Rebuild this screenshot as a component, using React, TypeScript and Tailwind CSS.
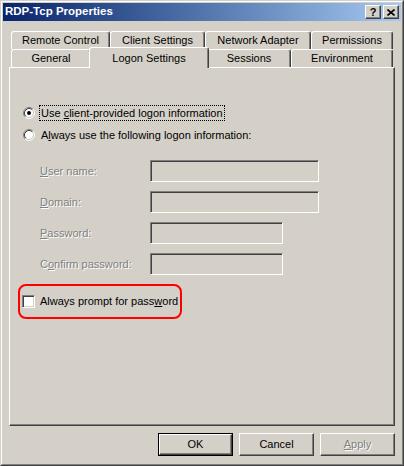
import React from "react";

// Win2000-style 3D edges
const raised =
  "border border-t-white border-l-white border-r-[#404040] border-b-[#404040] shadow-[inset_-1px_-1px_0_#808080]";
const sunken =
  "border border-t-[#808080] border-l-[#808080] border-r-white border-b-white shadow-[inset_1px_1px_0_#404040,inset_-1px_-1px_0_#D4D0C8]";
const disabledText = "text-[#808080] [text-shadow:1px_1px_0_#fff]";

type TabDef = { label: string; w: string; selected?: boolean };

const backTabs: TabDef[] = [
  { label: "Remote Control", w: "w-[99px]" },
  { label: "Client Settings", w: "w-[95px]" },
  { label: "Network Adapter", w: "w-[106px]" },
  { label: "Permissions", w: "w-[82px]" },
];

const frontTabs: TabDef[] = [
  { label: "General", w: "w-[80px]" },
  { label: "Logon Settings", w: "w-[120px]", selected: true },
  { label: "Sessions", w: "w-[84px]" },
  { label: "Environment", w: "w-[102px]" },
];

const Tab: React.FC<TabDef> = ({ label, w, selected }) => (
  <div
    className={`${w} ${
      selected ? "h-[21px] -mx-[2px] -mb-px relative z-10" : "h-[18px]"
    } flex items-center justify-center shrink-0 rounded-t-[3px] border-l border-t border-r border-white border-r-[#404040] shadow-[inset_-1px_0_0_#808080] bg-[#D4D0C8]`}
  >
    {label}
  </div>
);

const Radio: React.FC<{ checked?: boolean }> = ({ checked }) => (
  <svg width="12" height="12" viewBox="0 0 12 12" className="shrink-0">
    <circle cx="6" cy="6" r="4.2" fill="#fff" />
    <path d="M2.11 9.89A5.5 5.5 0 0 1 9.89 2.11" fill="none" stroke="#808080" />
    <path d="M9.89 2.11A5.5 5.5 0 0 1 2.11 9.89" fill="none" stroke="#fff" />
    <path d="M2.82 9.18A4.5 4.5 0 0 1 9.18 2.82" fill="none" stroke="#404040" />
    <path d="M9.18 2.82A4.5 4.5 0 0 1 2.82 9.18" fill="none" stroke="#D4D0C8" />
    {checked && <circle cx="6" cy="6" r="2" fill="#000" />}
  </svg>
);

const fields = [
  { pre: "", key: "U", post: "ser name:", w: "w-[169px]" },
  { pre: "", key: "D", post: "omain:", w: "w-[169px]" },
  { pre: "", key: "P", post: "assword:", w: "w-[133px]" },
  { pre: "C", key: "o", post: "nfirm password:", w: "w-[133px]" },
];

export default function App() {
  return (
    <div className="w-[404px] h-[466px] font-['Liberation_Sans',Arial,sans-serif] text-[11px] text-black leading-none select-none">
      {/* window frame */}
      <div className="w-full h-full border border-t-[#D4D0C8] border-l-[#D4D0C8] border-r-[#404040] border-b-[#404040]">
        <div className="w-full h-full border border-t-white border-l-white border-r-[#808080] border-b-[#808080] bg-[#D4D0C8] p-px flex flex-col">
          {/* title bar */}
          <div className="h-[18px] flex items-center bg-linear-to-r from-[#0A246A] to-[#A6CAF0] pl-[2px] pr-[2px]">
            <span className="text-white font-bold text-[11.5px]">RDP-Tcp Properties</span>
            <div className="ml-auto flex gap-[2px]">
              <div className={`${raised} w-[16px] h-[14px] bg-[#D4D0C8] flex items-center justify-center font-bold text-[11px]`}>
                ?
              </div>
              <div className={`${raised} w-[16px] h-[14px] bg-[#D4D0C8] flex items-center justify-center`}>
                <svg width="8" height="7" viewBox="0 0 8 7">
                  <path d="M0.5 0.5L7.5 6.5M7.5 0.5L0.5 6.5" stroke="#000" strokeWidth="1.6" />
                </svg>
              </div>
            </div>
          </div>

          {/* body */}
          <div className="flex-1 flex flex-col px-[6px] pt-[10px] pb-[7px]">
            {/* tabs */}
            <div className="flex flex-col pl-[2px]">
              <div className="flex h-[18px]">
                {backTabs.map((t) => (
                  <Tab key={t.label} {...t} />
                ))}
              </div>
              <div className="flex h-[18px] items-end">
                {frontTabs.map((t) => (
                  <Tab key={t.label} {...t} />
                ))}
              </div>
            </div>

            {/* tab page */}
            <div className="h-[359px] border border-t-white border-l-white border-r-[#404040] border-b-[#404040] shadow-[inset_-1px_-1px_0_#808080] flex flex-col pt-[37px]">
              <div className="flex items-center h-[16px] ml-[13px]">
                <Radio checked />
                <div className="ml-[4px] px-px h-[16px] leading-[14px] border border-dotted border-black">
                  Use <span className="underline">c</span>lient-provided logon information
                </div>
              </div>
              <div className="flex items-center h-[16px] ml-[13px] mt-[6px]">
                <Radio />
                <div className="ml-[4px] px-px h-[16px] leading-[14px] border border-transparent">
                  A<span className="underline">l</span>ways use the following logon information:
                </div>
              </div>

              <div className="flex flex-col gap-[9px] mt-[17px]">
                {fields.map((f) => (
                  <div key={f.post} className="flex items-center h-[22px] ml-[30px]">
                    <span className={`w-[110px] ${disabledText}`}>
                      {f.pre}
                      <span className="underline">{f.key}</span>
                      {f.post}
                    </span>
                    <div className={`${sunken} ${f.w} h-[22px] bg-[#D4D0C8]`} />
                  </div>
                ))}
              </div>

              <div className="mt-[9px] ml-[8px] w-[164px] h-[35px] border-2 border-[#FF0000] rounded-[8px] flex items-center pl-[2px]">
                <div className={`${sunken} w-[13px] h-[13px] bg-white shrink-0`} />
                <span className="ml-[5px]">
                  Always prompt for pass<span className="underline">w</span>ord
                </span>
              </div>
            </div>

            {/* buttons */}
            <div className="mt-[7px] flex justify-end gap-[6px]">
              <div className="w-[75px] h-[23px] border border-black">
                <div className={`${raised} w-full h-full flex items-center justify-center`}>OK</div>
              </div>
              <div className={`${raised} w-[75px] h-[23px] flex items-center justify-center`}>Cancel</div>
              <div className={`${raised} w-[75px] h-[23px] flex items-center justify-center ${disabledText}`}>
                <span>
                  <span className="underline">A</span>pply
                </span>
              </div>
            </div>
          </div>
        </div>
      </div>
    </div>
  );
}
